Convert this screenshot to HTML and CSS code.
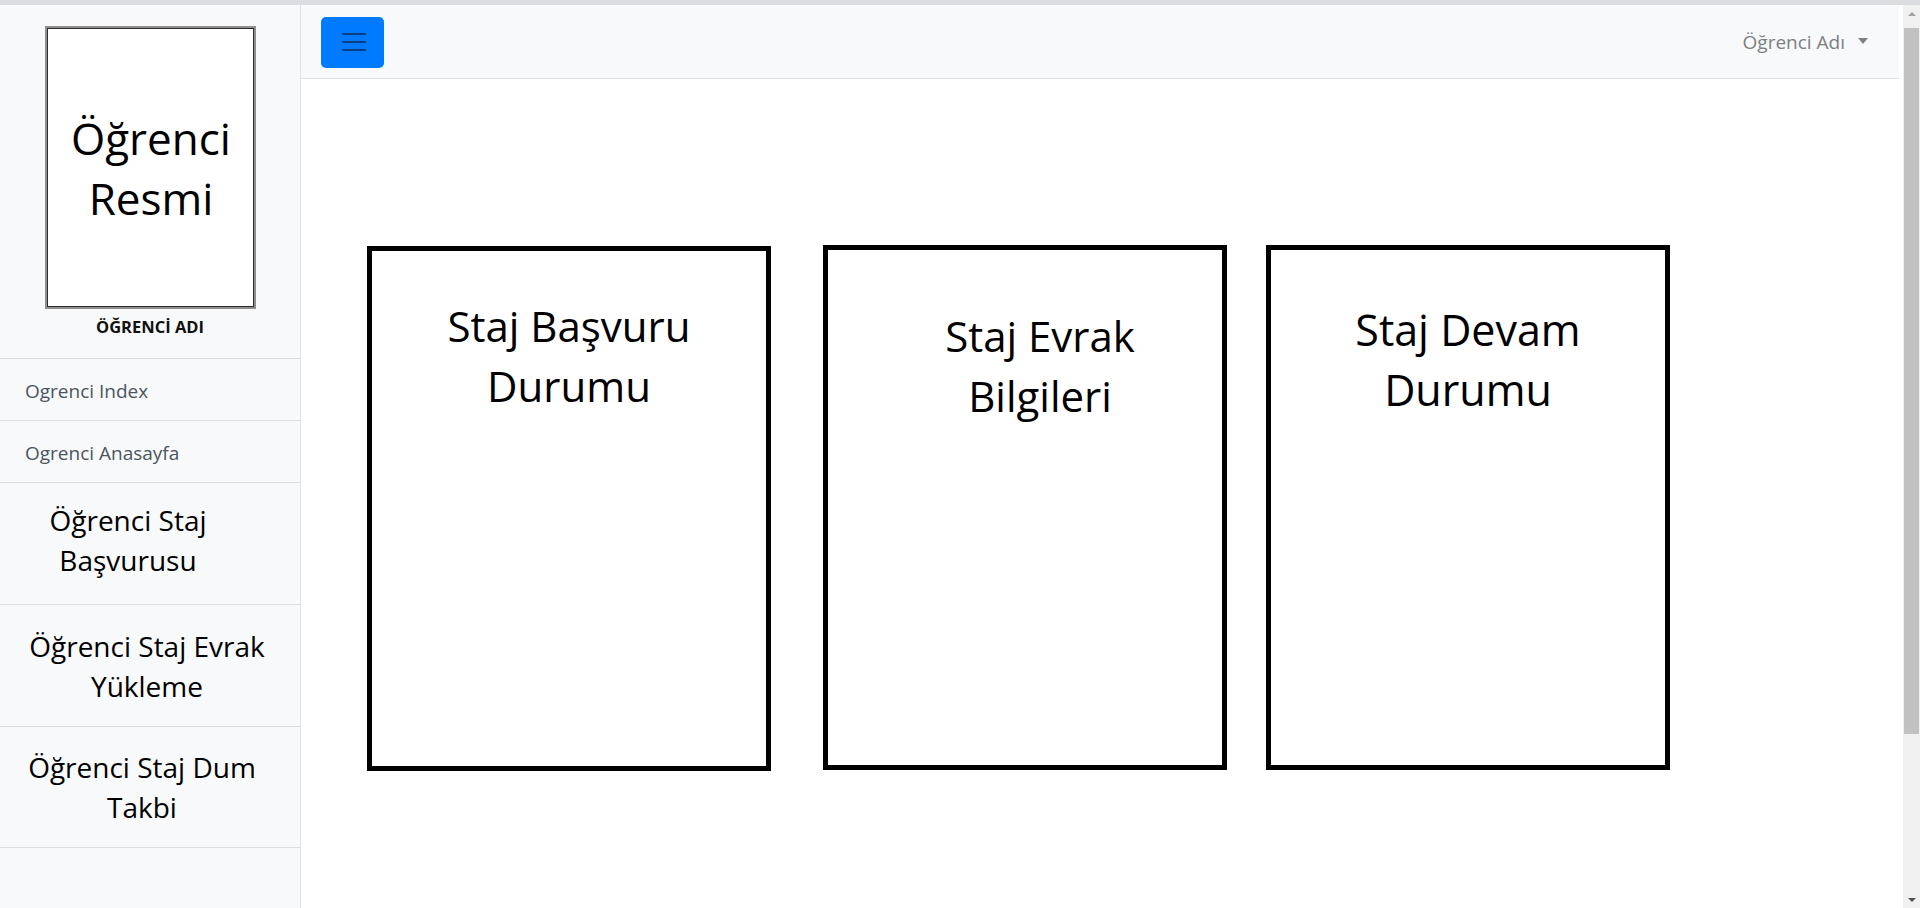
FILE: index.html
```html
<!DOCTYPE html>
<html lang="tr">
<head>
<meta charset="utf-8">
<title>Öğrenci Anasayfa</title>
<link rel="stylesheet" href="styles.css">
</head>
<body>
<div class="topstrip"></div>
<div class="shell">
  <aside class="sidebar">
    <div class="profile">
      <div class="photo"><span>Öğrenci<br>Resmi</span></div>
      <div class="profile-name">ÖĞRENCİ ADI</div>
    </div>
    <ul class="menu">
      <li class="menu-item menu-item--small"><a href="#">Ogrenci Index</a></li>
      <li class="menu-item menu-item--small"><a href="#">Ogrenci Anasayfa</a></li>
      <li class="menu-item menu-item--big menu-item--a"><a href="#">Öğrenci Staj<br>Başvurusu</a></li>
      <li class="menu-item menu-item--big menu-item--b"><a href="#">Öğrenci Staj Evrak<br>Yükleme</a></li>
      <li class="menu-item menu-item--big menu-item--c"><a href="#">Öğrenci Staj Dum<br>Takbi</a></li>
    </ul>
  </aside>
  <main class="main">
    <nav class="navbar">
      <button class="toggler" type="button" aria-label="Menü">
        <svg width="24" height="20" viewBox="0 0 24 20"><path d="M0 2h24M0 10h24M0 18h24" stroke="#073f7f" stroke-width="2"/></svg>
      </button>
      <div class="user-menu">Öğrenci Adı <span class="caret"></span></div>
    </nav>
    <section class="cards">
      <div class="card card--a"><span>Staj Başvuru<br>Durumu</span></div>
      <div class="card card--b"><span>Staj Evrak<br>Bilgileri</span></div>
      <div class="card card--c"><span>Staj Devam<br>Durumu</span></div>
    </section>
  </main>
  <div class="scrollbar">
    <div class="scroll-arrow scroll-arrow--up"></div>
    <div class="scroll-thumb"></div>
    <div class="scroll-track"></div>
    <div class="scroll-arrow scroll-arrow--down"></div>
  </div>
</div>
</body>
</html>
```
FILE: styles.css
```css
* { box-sizing: border-box; }
html, body { margin: 0; padding: 0; height: 100%; overflow: hidden; }
body {
  font-family: "Open Sans", "Noto Sans", sans-serif;
  color: #000;
  background: #fff;
}
a { text-decoration: none; color: inherit; }

.topstrip { height: 5px; background: #dcdde0; }

.shell { display: flex; height: 903px; }

/* Sidebar */
.sidebar {
  width: 301px;
  flex: 0 0 301px;
  background: #f8f9fa;
  border-right: 1px solid #dfe2e6;
  display: flex;
  flex-direction: column;
}
.profile {
  padding-top: 21px;
  padding-bottom: 20px;
  display: flex;
  flex-direction: column;
  align-items: center;
}
.photo {
  width: 211px;
  height: 283px;
  background: #fff;
  border: 2px solid #8f8f8f;
  box-shadow: inset 0 0 0 1px #2c2c2c;
  display: flex;
  align-items: center;
  justify-content: center;
  text-align: center;
  font-size: 44px;
  line-height: 60px;
  color: #000;
  padding-left: 2px;
}
.profile-name {
  margin-top: 7px;
  font-size: 16.5px;
  line-height: 22px;
  font-weight: 700;
  color: #111;
}
.menu { list-style: none; margin: 0; padding: 0; }
.menu-item {
  border-top: 1px solid #dadde0;
  display: flex;
  align-items: center;
}
.menu-item:last-child { border-bottom: 1px solid #dadde0; }
.menu-item--small {
  height: 62px;
  padding: 3px 0 0 25px;
  font-size: 19px;
  color: #4a5561;
}
.menu-item--big {
  height: 122px;
  justify-content: center;
  text-align: center;
  font-size: 28px;
  line-height: 40px;
  color: #000;
}
.menu-item--a { padding: 0 44px 8px 0; }
.menu-item--b { padding: 0 6px 0 0; }
.menu-item--c { padding: 0 16px 0 0; }

/* Main */
.main {
  flex: 1;
  display: flex;
  flex-direction: column;
  min-width: 0;
}
.navbar {
  height: 74px;
  background: #f8f9fa;
  border-bottom: 1px solid #dfe2e6;
  display: flex;
  align-items: center;
  justify-content: space-between;
  padding: 0 31px 0 20px;
  margin-right: 4px;
}
.toggler {
  width: 63px;
  height: 51px;
  background: #007bff;
  border: none;
  border-radius: 5px;
  display: flex;
  align-items: center;
  justify-content: center;
  padding: 0 0 0 2px;
  margin-top: 1px;
}
.toggler svg { display: block; }
.user-menu {
  display: flex;
  align-items: center;
  font-size: 19px;
  color: #7d7f81;
  margin-top: 1px;
}
.caret {
  display: inline-block;
  margin-left: 13px;
  width: 0;
  height: 0;
  border-left: 5.5px solid transparent;
  border-right: 5.5px solid transparent;
  border-top: 6px solid #7d7f81;
  margin-top: -3px;
}

.cards {
  display: flex;
  align-items: flex-start;
  padding: 166px 0 0 66px;
}
.card {
  width: 404px;
  height: 525px;
  border: 5px solid #000;
  background: #fff;
  text-align: center;
  font-size: 42px;
  line-height: 60px;
  color: #000;
}
.card span { display: block; }
.card--a { margin-top: 1px; padding-top: 45px; }
.card--b { margin-left: 52px; padding: 56px 0 0 30px; }
.card--c { margin-left: 39px; padding-top: 50px; font-size: 43px; }

/* Scrollbar */
.scrollbar {
  width: 17px;
  flex: 0 0 17px;
  background: #f0f0f0;
  display: flex;
  flex-direction: column;
  align-items: center;
}
.scroll-arrow {
  height: 17px;
  width: 17px;
  display: flex;
  align-items: center;
  justify-content: center;
}
.scroll-arrow::before {
  content: "";
  width: 0;
  height: 0;
  border-left: 4px solid transparent;
  border-right: 4px solid transparent;
}
.scroll-arrow--up::before { border-bottom: 4px solid #a3a3a3; }
.scroll-arrow--down::before { border-top: 4px solid #505050; }
.scroll-thumb {
  width: 15px;
  height: 706px;
  background: #c1c1c1;
  margin-top: 6px;
}
.scroll-track { flex: 1; }
```
